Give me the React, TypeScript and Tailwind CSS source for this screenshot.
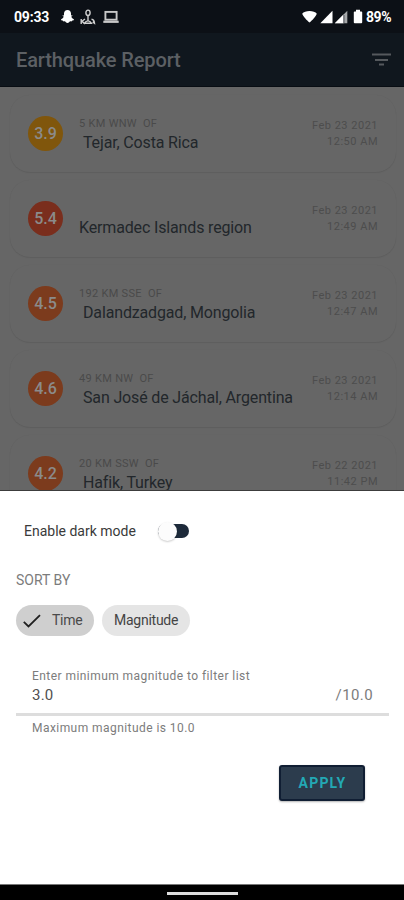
import { useState } from 'react';
import clsx from 'clsx';

type Quake = {
  magnitude: string;
  offset: string;
  place: string;
  date: string;
  time: string;
  color: string;
};

type SortKey = 'Time' | 'Magnitude';

const quakes: Quake[] = [
  { magnitude: '3.9', offset: '5 KM WNW  OF', place: 'Tejar, Costa Rica', date: 'Feb 23 2021', time: '12:50 AM', color: 'bg-[#80560c]' },
  { magnitude: '5.4', offset: '', place: 'Kermadec Islands region', date: 'Feb 23 2021', time: '12:49 AM', color: 'bg-[#7a2e1d]' },
  { magnitude: '4.5', offset: '192 KM SSE  OF', place: 'Dalandzadgad, Mongolia', date: 'Feb 23 2021', time: '12:47 AM', color: 'bg-[#7c3b1d]' },
  { magnitude: '4.6', offset: '49 KM NW  OF', place: 'San José de Jáchal, Argentina', date: 'Feb 23 2021', time: '12:14 AM', color: 'bg-[#7c3b1d]' },
  { magnitude: '4.2', offset: '20 KM SSW  OF', place: 'Hafik, Turkey', date: 'Feb 22 2021', time: '11:42 PM', color: 'bg-[#7c3b1d]' },
];

function StatusBar() {
  return (
    <div className="flex h-[33px] items-center justify-between bg-[#0c1016] pl-[14px] pr-[13px] text-white">
      <div className="flex items-center">
        <span className="w-[46px] text-[14px] leading-4 font-bold tracking-[-0.2px]">09:33</span>
        <svg className="h-[15px] w-[15px]" viewBox="0 0 15 15" fill="currentColor">
          <path d="M7.5 1C9.7 1 11 2.5 11 4.600v1.800l1.300-.2c.4.5-.2 1-1 1.400.4 1.500 1.300 2.300 2.700 2.800.1.7-.8 1-1.800 1.100l-.4.9c-1.600-.2-2.100.2-2.700.8-.9.9-2.300.9-3.200 0-.6-.6-1.100-1-2.700-.8l-.4-.9C1.800 11.400.9 11.100 1 10.400c1.400-.5 2.300-1.300 2.700-2.800-.8-.4-1.400-.9-1-1.400l1.300.2V4.600C4 2.500 5.300 1 7.500 1Z" />
        </svg>
        <svg className="ml-[5px] h-4 w-4" viewBox="0 0 16 16" fill="none" stroke="#d0d0d0" strokeWidth="1.400">
          <ellipse cx="8" cy="3.800" rx="2.100" ry="2.700" />
          <path d="M8 6.500v5M1.200 10v5M5 10l-3 2.300 3 2.600M4.500 14.300c1.800-3.200 5.200-3.200 7 0Z" />
          <path d="M11.500 10.300c1.800.2 2.800 1.500 3 4l-1.800-1.400" />
        </svg>
        <svg className="ml-[7px] h-[14px] w-[16px]" viewBox="0 0 16 14" fill="none" stroke="#c8c8c8">
          <rect x="2.400" y="1.900" width="11.200" height="7.800" strokeWidth="1.900" />
          <path d="M.3 11.800h15.400" strokeWidth="2.200" />
        </svg>
      </div>
      <div className="flex items-center">
        <svg className="h-[13px] w-[15px]" viewBox="0 0 15 13" fill="currentColor">
          <path d="M.3 3.600C2.500 0 12.500 0 14.700 3.600c0 2-4.700 7.200-7.200 9C5 10.800.3 5.600.3 3.600Z" />
        </svg>
        <svg className="ml-[3px] h-[14px] w-[13px]" viewBox="0 0 13 14" fill="currentColor">
          <path d="M12.500.8v12.400H.3Z" />
        </svg>
        <svg className="ml-[1px] h-[14px] w-[14px]" viewBox="0 0 14 14">
          <path d="M13.300.8v12.400H.8Z" fill="#a5a7a9" />
          <path d="M9.500 4.500v8.700H.8Z" fill="#fff" />
          <path d="M9.900 5v8" stroke="#30343a" strokeWidth=".8" />
        </svg>
        <svg className="ml-[5px] h-[15px] w-[10px]" viewBox="0 0 10 15" fill="currentColor">
          <path d="M3 .8h4v1.600h1.300c.6 0 .9.300.9.900v10c0 .6-.3.900-.9.900H1.700c-.6 0-.9-.3-.9-.9v-10c0-.6.3-.9.9-.9H3Z" />
        </svg>
        <span className="ml-[3px] text-[14px] leading-4 font-bold tracking-[-0.5px]">89%</span>
      </div>
    </div>
  );
}

function QuakeCard({ quake }: { quake: Quake }) {
  return (
    <li className="flex h-[77px] shrink-0 rounded-[20px] bg-[#666666] pr-[19px] pl-[18px] shadow-[0_1px_1px_rgba(0,0,0,0.07),0_0_1px_rgba(0,0,0,0.05)]">
      <div className={clsx('mt-[21px] flex size-[35px] items-center justify-center rounded-full text-base font-medium text-[#8b8b8b]', quake.color)}>
        {quake.magnitude}
      </div>
      <div className="ml-4 min-w-0 flex-1 pt-[21px] whitespace-pre">
        <p className="h-[17px] text-[11px] leading-4 tracking-[0.3px] text-[#4a4a4a]">{quake.offset}</p>
        <p className={clsx('text-base leading-5 tracking-[-0.15px] text-[#22272b]', quake.offset && 'pl-1')}>{quake.place}</p>
      </div>
      <div className="-mr-px pt-[23px] text-right text-[11px] leading-4 tracking-[0.5px] text-[#4d4d4d]">
        <p>{quake.date}</p>
        <p>{quake.time}</p>
      </div>
    </li>
  );
}

function SortChip({ label, selected, onSelect }: { label: SortKey; selected: boolean; onSelect: () => void }) {
  return (
    <button
      type="button"
      onClick={onSelect}
      className={clsx(
        'flex h-[31px] items-center rounded-full text-sm leading-5 tracking-[-0.25px]',
        selected ? 'bg-[#cfcfcf] pr-3 pl-[7px] text-[#4a4a4a]' : 'bg-[#e5e5e5] px-[11.5px] text-[#444444]',
      )}
    >
      {selected && (
        <svg className="mr-[11px] h-[14px] w-[18px]" viewBox="0 0 18 14" fill="none" stroke="#202020" strokeWidth="1.800">
          <path d="m.8 7.800 4.700 4.600L17 1.200" />
        </svg>
      )}
      <span className="-mt-px">{label}</span>
    </button>
  );
}

export default function App() {
  const [darkMode, setDarkMode] = useState(false);
  const [sortBy, setSortBy] = useState<SortKey>('Time');
  const [minMagnitude, setMinMagnitude] = useState('3.0');

  return (
    <div className="flex h-[900px] w-[404px] flex-col overflow-hidden bg-white font-[Roboto,sans-serif]">
      <StatusBar />
      <header className="flex h-[54px] shrink-0 items-center justify-between border-b border-[#080d13] bg-[#10171e] pr-[13px] pl-4">
        <h1 className="text-xl font-medium tracking-[-0.12px] text-[#5c6064]">Earthquake Report</h1>
        <svg className="h-[14px] w-[19px]" viewBox="0 0 19 14" stroke="#55595d" strokeWidth="2">
          <path d="M0 1.500h19M3 7h13M7 11.500h5" />
        </svg>
      </header>

      <ul className="flex h-[404px] shrink-0 flex-col gap-2 overflow-hidden border-b border-[#3c3c3c] bg-[#666666] pt-2 pr-2 pl-[10px]">
        {quakes.map((quake) => (
          <QuakeCard key={quake.place} quake={quake} />
        ))}
      </ul>

      <section className="flex flex-1 flex-col items-start bg-white px-4">
        <label className="mt-[28px] flex h-6 items-center pl-2">
          <span className="w-[134px] text-sm text-[#3a3a3a]">Enable dark mode</span>
          <button
            type="button"
            role="switch"
            aria-checked={darkMode}
            onClick={() => setDarkMode(!darkMode)}
            className={clsx('flex h-[14px] w-[31px] items-center rounded-full bg-[#1d2a3a]', darkMode && 'justify-end')}
          >
            <span className="size-[19px] shrink-0 rounded-full bg-[#fcfcfc] shadow-[0_1px_2px_rgba(0,0,0,0.2)]" />
          </button>
        </label>

        <h2 className="mt-[27px] text-sm leading-5 text-[#7c7c7c]">SORT BY</h2>
        <div className="mt-[15px] flex gap-2">
          <SortChip label="Time" selected={sortBy === 'Time'} onSelect={() => setSortBy('Time')} />
          <SortChip label="Magnitude" selected={sortBy === 'Magnitude'} onSelect={() => setSortBy('Magnitude')} />
        </div>

        <div className="mt-8 w-[373px]">
          <div className="border-b-[3px] border-[#dddddd] px-4 pb-2">
            <p className="text-xs leading-4 tracking-[0.44px] text-[#7c7c7c]">Enter minimum magnitude to filter list</p>
            <div className="mt-px flex h-5 items-center justify-between text-base">
              <input
                className="w-24 text-[15px] tracking-[0.2px] text-[#505050] outline-none"
                value={minMagnitude}
                onChange={(e) => setMinMagnitude(e.target.value)}
              />
              <span className="text-[15px] tracking-[0.4px] text-[#7c7c7c]">/10.0</span>
            </div>
          </div>
          <p className="mt-1 pl-4 text-xs leading-4 tracking-[0.44px] text-[#7c7c7c]">Maximum magnitude is 10.0</p>
        </div>

        <button
          type="button"
          className="mt-[28.500px] mr-[23px] h-9 w-[86px] self-end rounded-[3px] border-2 border-[#101e33] bg-[#2c3c4d] pl-px text-sm font-bold tracking-[1.200px] text-[#23a9b5] shadow-[0_1px_2px_rgba(0,0,0,0.3)]"
        >
          APPLY
        </button>
      </section>

      <footer className="flex h-4 shrink-0 items-center justify-center border-t border-[#777777] bg-black">
        <div className="mt-[2px] h-[3px] w-[71px] bg-[#dddddd]" />
      </footer>
    </div>
  );
}
